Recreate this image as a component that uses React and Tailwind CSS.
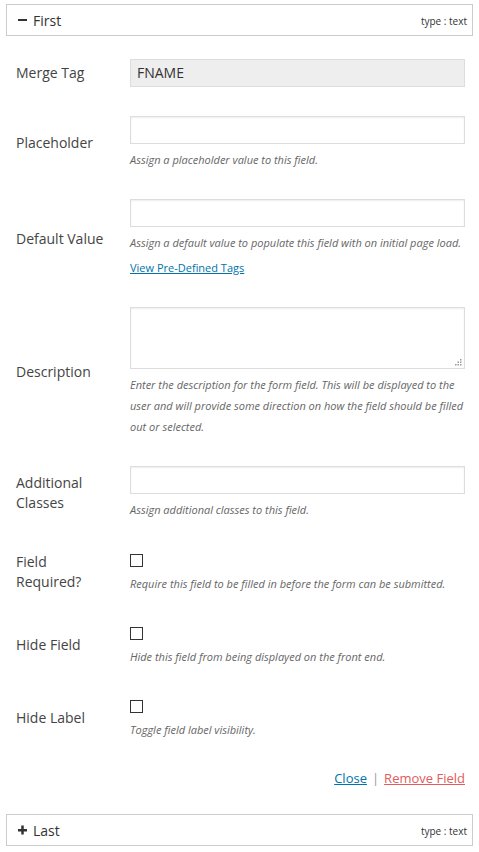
import React from "react";

const font = { fontFamily: '"Open Sans", "Noto Sans", sans-serif' };

function FieldHeader({ title, open }) {
  return (
    <div className="mx-[6px] flex h-[32px] items-center justify-between border border-[#ccc] bg-white pl-[10px] pr-[5px]">
      <div className="flex items-center text-[14px] text-[#333]">
        {open ? (
          <svg width="11" height="12" viewBox="0 0 11 12" className="mr-[5px]">
            <rect x="1" y="5" width="9" height="2" fill="#333" />
          </svg>
        ) : (
          <svg width="11" height="12" viewBox="0 0 11 12" className="mr-[5px]">
            <rect x="1" y="5" width="9" height="2.5" fill="#333" />
            <rect x="4.25" y="1.5" width="2.5" height="9" fill="#333" />
          </svg>
        )}
        <span>{title}</span>
      </div>
      <span className="mt-[3px] text-[10px] text-[#333]">type : text</span>
    </div>
  );
}

function Row({ label, children }) {
  return (
    <div className="flex items-center pb-[14.5px] pt-[14.75px]">
      <div className="w-[114px] shrink-0 pr-[20px] text-[14px] leading-[20px] text-[#444]">
        {label}
      </div>
      <div className="flex-1 pr-[14px]">{children}</div>
    </div>
  );
}

function Desc({ children }) {
  return (
    <p className="mt-[5px] text-[11px] italic leading-[21px] text-[#666]">
      {children}
    </p>
  );
}

function TextInput({ value, readOnly }) {
  return (
    <input
      type="text"
      defaultValue={value}
      readOnly={readOnly}
      className={
        "block h-[28px] w-full border px-[6px] text-[14px] text-[#333] outline-none " +
        (readOnly
          ? "border-[#ddd] bg-[#eee]"
          : "border-[#ddd] bg-white shadow-[inset_0_1px_2px_rgba(0,0,0,0.07)]")
      }
    />
  );
}

function CheckBox() {
  return (
    <div className="h-[18px] pt-[4px]">
      <span className="block h-[13px] w-[13px] border border-[#333] bg-white" />
    </div>
  );
}

export default function App() {
  return (
    <div className="min-h-[852px] bg-white pt-[4px]" style={font}>
      <FieldHeader title="First" open />

      <div className="pl-[16px] pt-[8px]">
        <Row label="Merge Tag">
          <TextInput value="FNAME" readOnly />
        </Row>

        <Row label="Placeholder">
          <TextInput />
          <Desc>Assign a placeholder value to this field.</Desc>
        </Row>

        <Row label="Default Value">
          <TextInput />
          <Desc>Assign a default value to populate this field with on initial page load.</Desc>
          <a href="#" className="mt-[3.5px] block text-[11px] leading-[21px] text-[#0073aa] underline">
            View Pre-Defined Tags
          </a>
        </Row>

        <Row label="Description">
          <div className="relative h-[62px] w-full border border-[#ddd] bg-white shadow-[inset_0_1px_2px_rgba(0,0,0,0.07)]">
            <svg width="7" height="7" viewBox="0 0 7 7" className="absolute bottom-[2px] right-[2px]">
              <rect x="5" y="0" width="1.5" height="1.5" fill="#999" />
              <rect x="2.5" y="2.5" width="1.5" height="1.5" fill="#999" />
              <rect x="5" y="2.5" width="1.5" height="1.5" fill="#999" />
              <rect x="0" y="5" width="1.5" height="1.5" fill="#999" />
              <rect x="2.5" y="5" width="1.5" height="1.5" fill="#999" />
              <rect x="5" y="5" width="1.5" height="1.5" fill="#999" />
            </svg>
          </div>
          <Desc>
            Enter the description for the form field. This will be displayed to the user and will
            provide some direction on how the field should be filled out or selected.
          </Desc>
        </Row>

        <Row label="Additional Classes">
          <TextInput />
          <Desc>Assign additional classes to this field.</Desc>
        </Row>

        <Row label="Field Required?">
          <CheckBox />
          <Desc>Require this field to be filled in before the form can be submitted.</Desc>
        </Row>

        <Row label="Hide Field">
          <CheckBox />
          <Desc>Hide this field from being displayed on the front end.</Desc>
        </Row>

        <Row label="Hide Label">
          <CheckBox />
          <Desc>Toggle field label visibility.</Desc>
        </Row>

        <div className="flex justify-end pr-[14px] pt-[13.5px] text-[13px] leading-[20px]">
          <a href="#" className="text-[#0073aa] underline">Close</a>
          <span className="px-[5px] text-[#999]">|</span>
          <a href="#" className="text-[#e35b5b] underline">Remove Field</a>
        </div>
      </div>

      <div className="pt-[26px]">
        <FieldHeader title="Last" />
      </div>
    </div>
  );
}
